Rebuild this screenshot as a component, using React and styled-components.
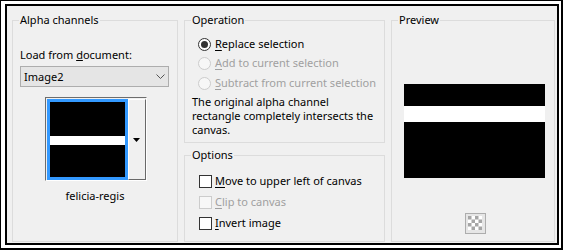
import React from 'react'
import styled, { createGlobalStyle } from 'styled-components'

const GlobalStyle = createGlobalStyle`
  html, body {
    margin: 0;
    padding: 0;
    background: #fff;
  }
  body {
    font-family: "Noto Sans", "Open Sans", sans-serif;
    font-size: 11px;
    color: #000;
  }
`

const Frame = styled.div`
  box-sizing: border-box;
  width: 563px;
  height: 250px;
  border: solid #000;
  border-width: 1px 2px 2px 1px;
  padding: 3px 2px 3px 4px;
`

const Dialog = styled.div`
  box-sizing: border-box;
  height: 100%;
  border: 2px solid #000;
  background: #f0f0f0;
  display: grid;
  grid-template-columns: 166px 201px 1fr;
  column-gap: 6px;
  padding: 6px 2px 1px 5px;
`

const Column = styled.div`
  display: flex;
  flex-direction: column;
  gap: 4px;
  min-height: 0;
`

const Group = styled.fieldset`
  margin: 0;
  min-width: 0;
  border: 1px solid #dcdcdc;
  padding: 0 7px;
  display: flex;
  flex-direction: column;
  height: ${p => p.$h || 'auto'};
  flex: ${p => (p.$grow ? 1 : 'none')};
  box-sizing: border-box;
`

const Legend = styled.legend`
  padding: 0 1px;
  margin-left: -1px;
  line-height: 16px;
  height: 16px;
`

const Label = styled.div`
  line-height: 16px;
  margin-top: ${p => p.$mt || 0}px;
  text-align: ${p => (p.$center ? 'center' : 'left')};
  white-space: nowrap;
`

const Select = styled.div`
  margin-top: 3px;
  margin-right: 1px;
  height: 21px;
  box-sizing: border-box;
  border: 1px solid #adadad;
  background: #e5e5e5;
  display: flex;
  align-items: center;
  justify-content: space-between;
  padding: 0 3px 0 3px;
  line-height: 16px;
`

const ThumbFrame = styled.div`
  margin-top: 10px;
  align-self: center;
  display: flex;
  border: 1px solid;
  border-color: #6d6d6d #fff #fff #6d6d6d;
  padding: 1px 0 0 1px;
  margin-left: 1px;
`

const Thumb = styled.div`
  width: 75px;
  height: 75px;
  border: 3px solid #3399ff;
  background: #000;
  display: flex;
  flex-direction: column;
`

const Band = styled.div`
  height: ${p => p.$h}px;
  margin-top: ${p => p.$top}px;
  background: #fff;
`

const ThumbButton = styled.div`
  width: 18px;
  box-sizing: border-box;
  border: 1px solid;
  border-color: #fff #696969 #696969 #fff;
  background: #f0f0f0;
  display: flex;
  align-items: center;
  justify-content: center;
`

const Option = styled.div`
  display: flex;
  align-items: center;
  height: ${p => p.$h}px;
  line-height: 16px;
  white-space: nowrap;
  color: ${p => (p.$disabled ? '#a0a0a0' : '#000')};
  u {
    text-decoration-thickness: 1px;
    text-underline-offset: 2px;
  }
`

const Radio = styled.span`
  box-sizing: border-box;
  flex: none;
  width: 13px;
  height: 13px;
  border-radius: 50%;
  margin: 1px 4px 0 6px;
  border: 1px solid ${p => (p.$disabled ? '#cccccc' : '#333')};
  background: ${p => (p.$disabled ? '#f7f7f7' : '#fff')};
  display: flex;
  align-items: center;
  justify-content: center;
  &::after {
    content: '';
    width: 7px;
    height: 7px;
    border-radius: 50%;
    background: ${p => (p.$checked ? '#333' : 'transparent')};
  }
`

const Check = styled.span`
  box-sizing: border-box;
  flex: none;
  width: 13px;
  height: 13px;
  margin: 2px 3px 0 7px;
  border: 1px solid ${p => (p.$disabled ? '#cccccc' : '#333')};
  background: ${p => (p.$disabled ? '#f7f7f7' : '#fff')};
`

const Spacer = styled.div`
  height: ${p => p.$h}px;
  flex: none;
`

const Description = styled.div`
  margin-top: 2px;
  line-height: 14px;
`

const PreviewImage = styled.div`
  margin-top: 56px;
  margin-left: 5px;
  width: 141px;
  height: 94px;
  background: #000;
  display: flex;
  flex-direction: column;
`

const Transparency = styled.div`
  margin-top: 35px;
  align-self: center;
  margin-left: 4px;
  display: flex;
`

const Chevron = () => (
  <svg width="9" height="5" viewBox="0 0 9 5">
    <path d="M0.5 0.5 L4.5 4.5 L8.5 0.5" fill="none" stroke="#555" strokeWidth="1" />
  </svg>
)

const Arrow = () => (
  <svg width="7" height="4" viewBox="0 0 7 4">
    <path d="M0 0 H7 L3.5 4 Z" fill="#000" />
  </svg>
)

const Checker = () => {
  const cells = []
  for (let r = 0; r < 4; r++)
    for (let c = 0; c < 4; c++)
      if ((r + c) % 2 === 0)
        cells.push(<rect key={`${r}-${c}`} x={3 + c * 3.5} y={3 + r * 3.5} width="3.5" height="3.5" fill="#a6a6a6" />)
  return (
    <svg width="21" height="21" viewBox="0 0 21 21">
      <rect x="0.5" y="0.5" width="20" height="20" fill="#e6e6e6" stroke="#adadad" />
      <rect x="3" y="3" width="14" height="14" fill="#fff" />
      {cells}
    </svg>
  )
}

export default function App() {
  return (
    <>
      <GlobalStyle />
      <Frame>
        <Dialog>
          <Group $grow>
            <Legend>Alpha channels</Legend>
            <Label $mt={19}>
              Load from <u>d</u>ocument:
            </Label>
            <Select>
              <span>Image2</span>
              <Chevron />
            </Select>
            <ThumbFrame>
              <Thumb>
                <Band $top={34} $h={9} />
              </Thumb>
              <ThumbButton>
                <Arrow />
              </ThumbButton>
            </ThumbFrame>
            <Label $mt={7} $center>
              felicia-regis
            </Label>
          </Group>

          <Column>
            <Group $h="131px">
              <Legend>Operation</Legend>
              <Spacer $h={6} />
              <Option $h={19.5}>
                <Radio $checked />
                <span>
                  <u>R</u>eplace selection
                </span>
              </Option>
              <Option $h={19.5} $disabled>
                <Radio $disabled />
                <span>
                  <u>A</u>dd to current selection
                </span>
              </Option>
              <Option $h={19.5} $disabled>
                <Radio $disabled />
                <span>
                  <u>S</u>ubtract from current selection
                </span>
              </Option>
              <Description>
                The original alpha channel rectangle completely intersects the canvas.
              </Description>
            </Group>
            <Group $grow>
              <Legend>Options</Legend>
              <Spacer $h={7} />
              <Option $h={21}>
                <Check />
                <span>
                  <u>M</u>ove to upper left of canvas
                </span>
              </Option>
              <Option $h={21} $disabled>
                <Check $disabled />
                <span>
                  <u>C</u>lip to canvas
                </span>
              </Option>
              <Option $h={21}>
                <Check />
                <span>
                  <u>I</u>nvert image
                </span>
              </Option>
            </Group>
          </Column>

          <Group $grow>
            <Legend>Preview</Legend>
            <PreviewImage>
              <Band $top={22} $h={16} />
            </PreviewImage>
            <Transparency>
              <Checker />
            </Transparency>
          </Group>
        </Dialog>
      </Frame>
    </>
  )
}
